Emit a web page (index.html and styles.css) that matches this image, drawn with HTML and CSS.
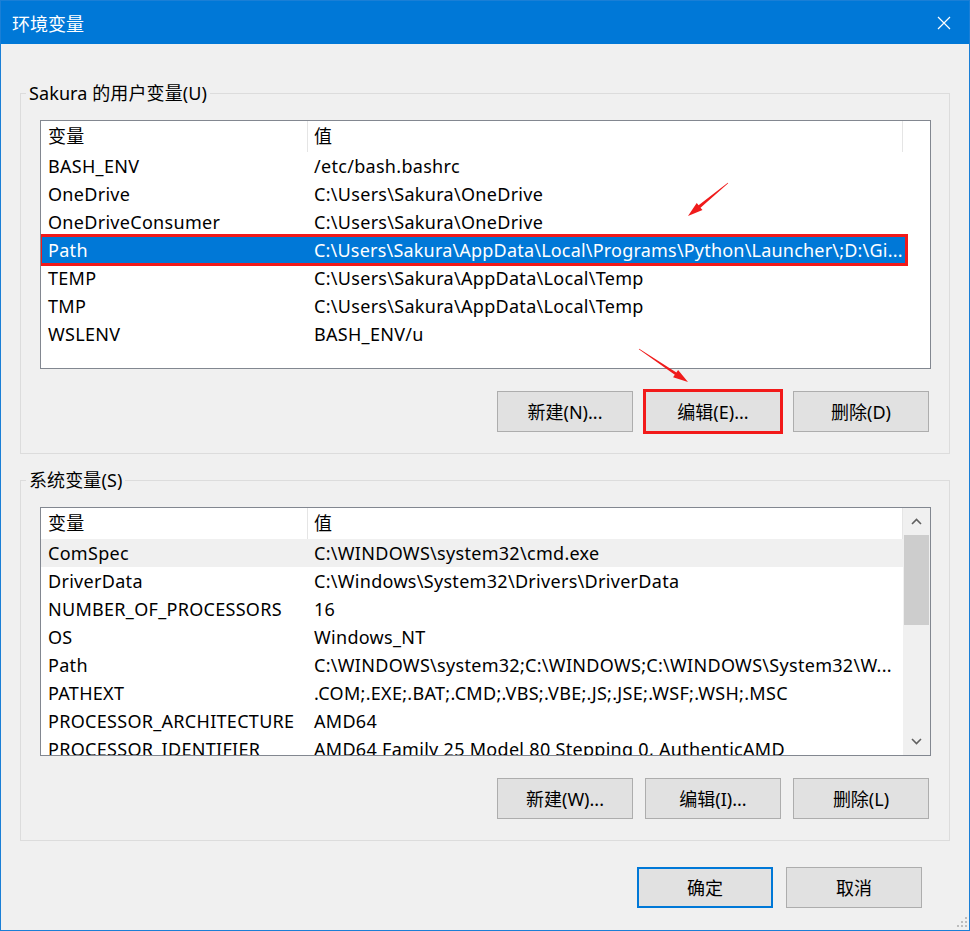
FILE: index.html
```html
<!DOCTYPE html>
<html lang="zh-CN">
<head>
<meta charset="utf-8">
<title>环境变量</title>
<link rel="stylesheet" href="styles.css">
</head>
<body>
<div class="window">
  <div class="titlebar">
    <span class="title">环境变量</span>
    <svg class="close" width="14" height="14" viewBox="0 0 14 14"><path d="M1 1 L13 13 M13 1 L1 13" stroke="#fff" stroke-width="1.2" fill="none"/></svg>
  </div>
  <div class="content">
    <fieldset class="group">
      <legend>Sakura 的用户变量(U)</legend>
      <div class="list">
        <div class="main">
          <div class="row head"><span class="c1">变量</span><span class="c2">值</span></div>
          <div class="row"><span class="c1">BASH_ENV</span><span class="c2">/etc/bash.bashrc</span></div>
          <div class="row"><span class="c1">OneDrive</span><span class="c2">C:\Users\Sakura\OneDrive</span></div>
          <div class="row"><span class="c1">OneDriveConsumer</span><span class="c2">C:\Users\Sakura\OneDrive</span></div>
          <div class="row selected"><span class="c1">Path</span><span class="c2">C:\Users\Sakura\AppData\Local\Programs\Python\Launcher\;D:\Gi...</span></div>
          <div class="row"><span class="c1">TEMP</span><span class="c2">C:\Users\Sakura\AppData\Local\Temp</span></div>
          <div class="row"><span class="c1">TMP</span><span class="c2">C:\Users\Sakura\AppData\Local\Temp</span></div>
          <div class="row"><span class="c1">WSLENV</span><span class="c2">BASH_ENV/u</span></div>
        </div>
      </div>
      <div class="buttons">
        <button class="btn">新建(N)...</button>
        <button class="btn marked">编辑(E)...</button>
        <button class="btn">删除(D)</button>
      </div>
    </fieldset>
    <fieldset class="group second">
      <legend>系统变量(S)</legend>
      <div class="list">
        <div class="main">
          <div class="row head"><span class="c1">变量</span><span class="c2">值</span></div>
          <div class="row hover"><span class="c1">ComSpec</span><span class="c2">C:\WINDOWS\system32\cmd.exe</span></div>
          <div class="row"><span class="c1">DriverData</span><span class="c2">C:\Windows\System32\Drivers\DriverData</span></div>
          <div class="row"><span class="c1">NUMBER_OF_PROCESSORS</span><span class="c2">16</span></div>
          <div class="row"><span class="c1">OS</span><span class="c2">Windows_NT</span></div>
          <div class="row"><span class="c1">Path</span><span class="c2">C:\WINDOWS\system32;C:\WINDOWS;C:\WINDOWS\System32\W...</span></div>
          <div class="row"><span class="c1">PATHEXT</span><span class="c2">.COM;.EXE;.BAT;.CMD;.VBS;.VBE;.JS;.JSE;.WSF;.WSH;.MSC</span></div>
          <div class="row"><span class="c1">PROCESSOR_ARCHITECTURE</span><span class="c2">AMD64</span></div>
          <div class="row"><span class="c1">PROCESSOR_IDENTIFIER</span><span class="c2">AMD64 Family 25 Model 80 Stepping 0, AuthenticAMD</span></div>
        </div>
        <div class="scrollbar">
          <div class="sb-btn"><svg width="11" height="7" viewBox="0 0 11 7"><path d="M1 6 L5.5 1.5 L10 6" stroke="#606060" stroke-width="1.6" fill="none"/></svg></div>
          <div class="sb-track"><div class="sb-thumb"></div></div>
          <div class="sb-btn"><svg width="11" height="7" viewBox="0 0 11 7"><path d="M1 1 L5.5 5.5 L10 1" stroke="#606060" stroke-width="1.6" fill="none"/></svg></div>
        </div>
      </div>
      <div class="buttons">
        <button class="btn">新建(W)...</button>
        <button class="btn">编辑(I)...</button>
        <button class="btn">删除(L)</button>
      </div>
    </fieldset>
    <div class="footer">
      <button class="btn default">确定</button>
      <button class="btn">取消</button>
    </div>
  </div>
  <svg class="grip" width="12" height="12" viewBox="0 0 12 12">
    <rect x="9" y="1" width="2" height="2" fill="#bdbdbd"/>
    <rect x="5" y="5" width="2" height="2" fill="#bdbdbd"/>
    <rect x="9" y="5" width="2" height="2" fill="#bdbdbd"/>
    <rect x="1" y="9" width="2" height="2" fill="#bdbdbd"/>
    <rect x="5" y="9" width="2" height="2" fill="#bdbdbd"/>
    <rect x="9" y="9" width="2" height="2" fill="#bdbdbd"/>
  </svg>
  <svg class="annotations" width="970" height="931" viewBox="0 0 970 931">
    <polygon fill="#f01b1b" points="728.2,183.2 700.5,207.7 702.5,210.0 688,216 696.7,203.0 698.6,205.3 727.8,182.8"/>
    <polygon fill="#f01b1b" points="638.8,349.2 674.8,374.8 673.1,377.3 688,382 678.1,369.9 676.4,372.4 639.2,348.8"/>
  </svg>
</div>
</body>
</html>
```
FILE: styles.css
```css
* { box-sizing: border-box; }
html, body { margin: 0; padding: 0; background: #f0f0f0; }
body {
  font-family: "Noto Sans", "Noto Sans CJK SC", sans-serif;
  font-size: 18px;
  color: #000;
}
.window {
  position: relative;
  width: 970px;
  height: 931px;
  border: 1px solid #1a7fd6;
  background: #f0f0f0;
  display: flex;
  flex-direction: column;
  overflow: hidden;
}
.titlebar {
  height: 43px;
  flex: none;
  background: #0078d7;
  color: #fff;
  display: flex;
  align-items: center;
  justify-content: space-between;
  padding: 0 18px 0 11px;
}
.title { font-family: "Noto Sans CJK SC", sans-serif; font-size: 18px; line-height: 24px; }
.close { display: block; }
.content {
  padding: 37px 19px 0 19px;
  display: flex;
  flex-direction: column;
}
.group {
  margin: 0;
  border: 1px solid #dcdcdc;
  padding: 15px 0 21px 0;
  min-width: 0;
}
.group.second { margin-top: 14px; }
.group legend {
  margin-left: 5px;
  padding: 0 3px;
  line-height: 24px;
  height: 24px;
  letter-spacing: 0.1px;
}
.list {
  margin-left: 19px;
  width: 891px;
  height: 249px;
  border: 1px solid #828790;
  background: #fff;
  display: flex;
  overflow: hidden;
}
.main { flex: 1; min-width: 0; }
.row {
  display: flex;
  height: 28px;
  line-height: 28px;
  white-space: nowrap;
  letter-spacing: 0.3px;
}
.row .c1 { width: 266px; flex: none; padding-left: 7px; overflow: hidden; }
.row .c2 { width: 595px; flex: none; padding-left: 7px; overflow: hidden; }
.row.head { height: 31px; line-height: 31px; }
.row.head .c1 { border-right: 1px solid #e5e5e5; width: 267px; }
.row.head .c2 { border-right: 1px solid #e5e5e5; width: 595px; height: 31px; padding-left: 6px; }
.row.head span { line-height: 31px; }
.row.selected {
  background: #0078d7;
  color: #fff;
  width: 865px;
  outline: 3px solid #f21a1a;
  outline-offset: -1px;
}
.row.selected .c2 { letter-spacing: 0.2px; }
.row.hover { background: #f0f0f0; }
.scrollbar {
  width: 27px;
  flex: none;
  background: #f0f0f0;
  display: flex;
  flex-direction: column;
}
.sb-btn {
  height: 27px;
  flex: none;
  display: flex;
  align-items: center;
  justify-content: center;
}
.sb-track { flex: 1; padding: 0 1px; }
.sb-thumb { height: 90px; background: #cdcdcd; }
.buttons {
  margin-top: 22px;
  display: flex;
  justify-content: flex-end;
  gap: 12px;
  padding-right: 20px;
}
.btn {
  font: inherit;
  color: #000;
  width: 136px;
  height: 41px;
  background: #e1e1e1;
  border: 1px solid #adadad;
  padding: 0;
  line-height: 24px;
}
.btn.marked {
  border: 1px solid #f21a1a;
  outline: 2px solid #f21a1a;
}
.btn.default { border: 2px solid #0078d7; }
.footer {
  margin-top: 26px;
  display: flex;
  justify-content: flex-end;
  gap: 13px;
  padding-right: 28px;
}
.grip { position: absolute; right: 1px; bottom: 2px; }
.annotations { position: absolute; left: -1px; top: -1px; pointer-events: none; }
```
